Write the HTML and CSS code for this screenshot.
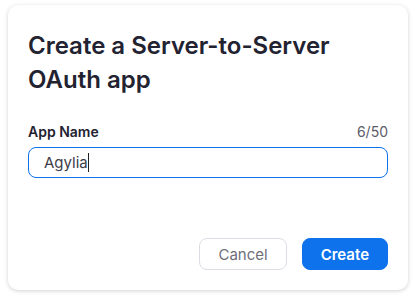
FILE: index.html
```html
<!DOCTYPE html>
<html>
<head>
  <title>Create app</title>
  <link rel="stylesheet" href="styles.css">
</head>
<body>
  <div class="dialog">
    <h2 class="dialog-title">Create a Server-to-Server OAuth app</h2>
    <div class="field">
      <div class="field-head">
        <label class="field-label" for="appName">App Name</label>
        <span class="field-count">6/50</span>
      </div>
      <div class="field-input">Agylia<span class="caret"></span></div>
    </div>
    <div class="dialog-footer">
      <button class="btn btn-cancel">Cancel</button>
      <button class="btn btn-create">Create</button>
    </div>
  </div>
</body>
</html>
```

FILE: styles.css
```css
body {
  margin: 0;
  padding: 5px 7px 8px 8px;
  font-family: Inter, "Noto Sans", sans-serif;
  background-color: #fff;
}

.dialog {
  height: 285px;
  box-sizing: border-box;
  padding: 24px 20px 20px 20px;
  border-radius: 10px;
  background-color: #fff;
  box-shadow: 0 1px 4px rgba(0, 0, 0, 0.18);
  display: flex;
  flex-direction: column;
}

.dialog-title {
  margin: 0;
  font-size: 24px;
  line-height: 34px;
  font-weight: 600;
  color: #222230;
  padding-right: 40px;
}

.field {
  margin-top: 26px;
}

.field-head {
  display: flex;
  justify-content: space-between;
  align-items: baseline;
  font-size: 14px;
  line-height: 18px;
}

.field-label {
  font-weight: 600;
  color: #222230;
}

.field-count {
  color: #5c5c68;
}

.field-input {
  margin-top: 6px;
  height: 31px;
  box-sizing: border-box;
  border: 1px solid #0e72ed;
  border-radius: 8px;
  padding: 0 15px;
  font-size: 15px;
  line-height: 29px;
  color: #3d3d48;
}

.caret {
  display: inline-block;
  width: 1px;
  height: 19px;
  background-color: #222;
  vertical-align: -4px;
}

.dialog-footer {
  margin-top: auto;
  display: flex;
  justify-content: flex-end;
  gap: 15px;
}

.btn {
  height: 32px;
  padding: 0 18px;
  border-radius: 8px;
  font-family: Inter, "Noto Sans", sans-serif;
  font-size: 15px;
  cursor: pointer;
}

.btn-cancel {
  background-color: #fff;
  border: 1px solid #dcdce4;
  color: #6e6e78;
}

.btn-create {
  background-color: #0e72ed;
  border: 1px solid #0e72ed;
  color: #fff;
  font-weight: 600;
}
```
